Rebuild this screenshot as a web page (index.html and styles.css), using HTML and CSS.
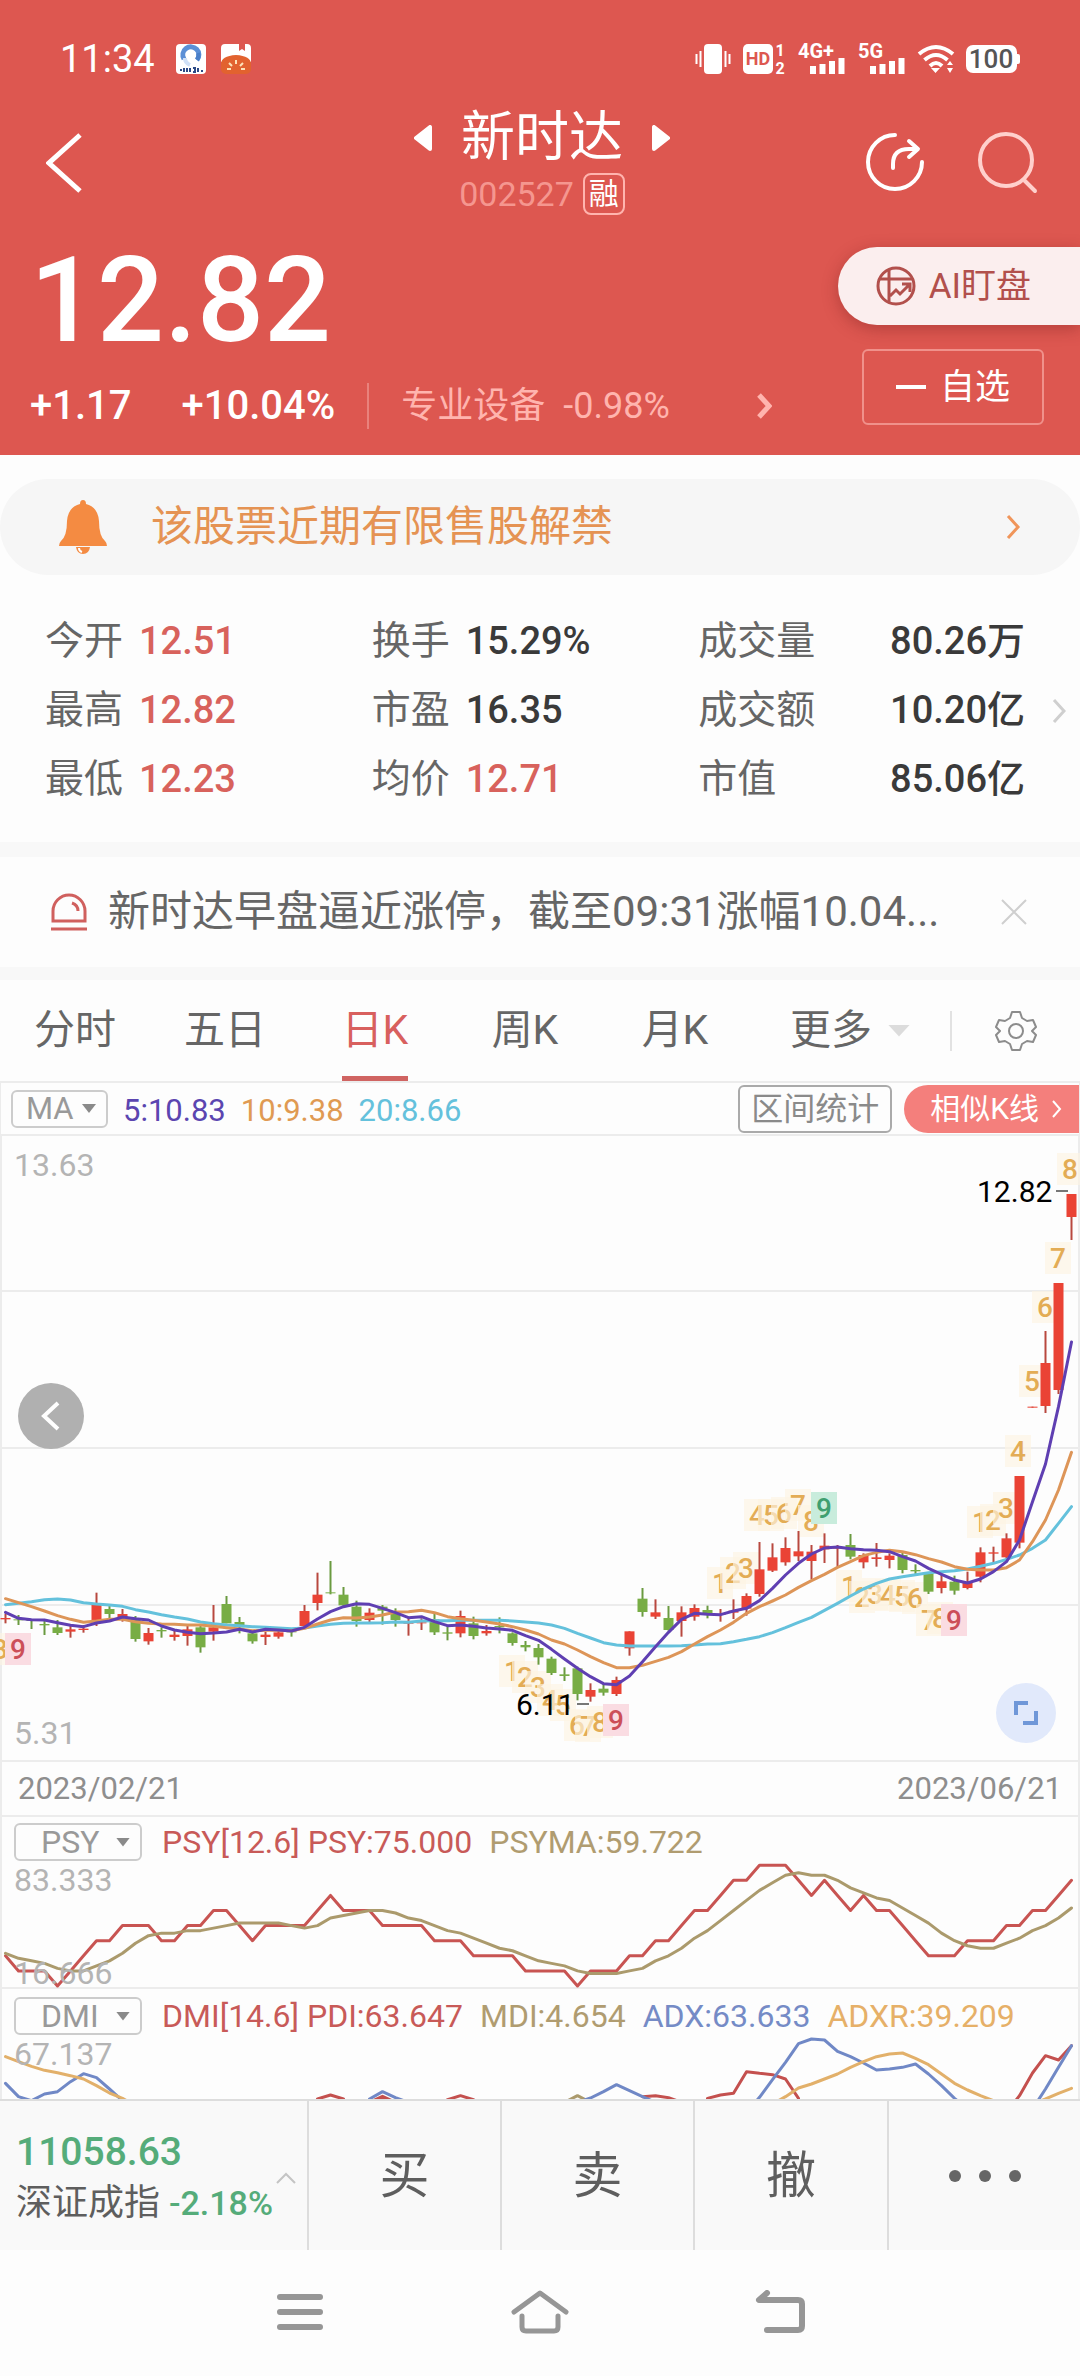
FILE: index.html
```html
<!DOCTYPE html>
<html lang="zh-CN">
<head>
<meta charset="utf-8">
<meta name="viewport" content="width=device-width, initial-scale=1">
<title>新时达 002527</title>
<link rel="stylesheet" href="styles.css">
</head>
<body>
<header class="header">
  <div class="status">
    <span class="clock">11:34</span>
    <svg class="app-icon" viewBox="0 0 30 30"><rect width="30" height="30" rx="4" fill="#fff"/><path d="M8 15a8 8 0 1 1 13 1" fill="none" stroke="#5b8fd6" stroke-width="5"/><path d="M21 16a8 8 0 0 0 1-7" fill="none" stroke="#4a7fc9" stroke-width="4"/><path d="M9 14q0 5 5 7" fill="none" stroke="#cfe0f7" stroke-width="4"/><path d="M4 26h2M8 24v4M11 24v4M14 24v4M17 24h2v4h-2M22 24v4M25 27h2" stroke="#2c4a86" stroke-width="2" fill="none"/></svg>
    <svg class="app-icon" viewBox="0 0 30 30"><path d="M4 0h14v7l3-2 3 2V0h2a4 4 0 0 1 4 4v14H0V4a4 4 0 0 1 4-4z" fill="#fff"/><path d="M0 20q0-8 15-9 15 1 15 9v5a5 5 0 0 1-5 5H5a5 5 0 0 1-5-5z" fill="#e2622f"/><path d="M6 25h4M8 19l3 3M15 16v4M22 19l-3 3M24 25h-4" stroke="#fde3b8" stroke-width="2"/></svg>
    <span class="status-right">
      <svg width="36" height="30" viewBox="0 0 36 30"><rect x="9" width="18" height="30" rx="4" fill="#fff"/><path d="M5.500 7v16M30.500 7v16M1.500 10v10M34.500 10v10" stroke="#fff" stroke-width="2"/></svg>
      <svg width="43" height="30" viewBox="0 0 43 30"><rect width="30" height="30" rx="5" fill="#fff"/><text x="15" y="21" text-anchor="middle" class="t-hd">HD</text><text x="37" y="12" text-anchor="middle" class="t-sim">1</text><text x="37" y="30" text-anchor="middle" class="t-sim">2</text></svg>
      <svg width="48" height="30" viewBox="0 0 48 30"><text x="0" y="14" class="t-net">4G+</text><path d="M15 22v8M24.500 20v10M34 17v13M43.500 14v16" stroke="#fff" stroke-width="6"/></svg>
      <svg width="48" height="30" viewBox="0 0 48 30"><text x="0" y="14" class="t-net">5G</text><path d="M15 22v8M24.500 20v10M34 17v13M43.500 14v16" stroke="#fff" stroke-width="6"/></svg>
      <svg width="36" height="30" viewBox="0 0 36 30"><path d="M1 10q17-14 34 0M6.500 16q11.500-10 23 0M12 22q6-6 12 0" fill="none" stroke="#fff" stroke-width="4"/><path d="M13 24h9l-4.500 5zM29 21l3-4 3 4zM29 24l3 5 3-5z" fill="#fff"/></svg>
      <svg width="54" height="28" viewBox="0 0 54 28"><rect width="51" height="28" rx="7" fill="#fff"/><rect x="49" y="9" width="5" height="10" rx="2" fill="#fff"/><text x="25" y="23" text-anchor="middle" class="t-bat">100</text></svg>
    </span>
  </div>

  <div class="title-row">
    <button class="icon-btn back" aria-label="返回"><svg width="36" height="60" viewBox="0 0 36 60"><path d="M34 2L3 30l31 28" fill="none" stroke="#fff" stroke-width="5"/></svg></button>
    <div class="title">
      <div class="name-line">
        <button class="icon-btn" aria-label="上一只"><svg width="18" height="26" viewBox="0 0 18 26"><path d="M16 2v22L2 13z" fill="#fff" stroke="#fff" stroke-width="4" stroke-linejoin="round"/></svg></button>
        <h1>新时达</h1>
        <button class="icon-btn" aria-label="下一只"><svg width="18" height="26" viewBox="0 0 18 26"><path d="M2 2v22l14-11z" fill="#fff" stroke="#fff" stroke-width="4" stroke-linejoin="round"/></svg></button>
      </div>
      <div class="code-line"><span>002527</span><span class="margin-tag">融</span></div>
    </div>
    <div class="actions">
      <button class="icon-btn" aria-label="分享"><svg width="58" height="60" viewBox="0 0 58 60"><g fill="none" stroke="#fff" stroke-width="4" stroke-linecap="round" stroke-linejoin="round"><path d="M29 3A27 27 0 1 0 56 30"/><path d="M27 36v-4q0-15 16-15h8M43 9l9 8-9 8"/></g></svg></button>
      <button class="icon-btn" aria-label="搜索"><svg width="60" height="62" viewBox="0 0 60 62"><g fill="none" stroke="#ffd0cc" stroke-width="4" stroke-linecap="round"><circle cx="28" cy="28" r="26"/><path d="M47 49l10 10"/></g></svg></button>
    </div>
  </div>

  <div class="quote">
    <div class="quote-main">
      <div class="price">12.82</div>
      <div class="change-line">
        <span class="chg">+1.17</span><span class="chg pct">+10.04%</span>
        <a href="#sector" class="sector"><span>专业设备</span><span class="sector-pct">-0.98%</span>
        <svg width="16" height="26" viewBox="0 0 16 26"><path d="M3 2l10 11L3 24" fill="none" stroke="#ffb4ae" stroke-width="5"/></svg></a>
      </div>
    </div>
    <div class="quote-side">
      <button class="ai"><svg width="40" height="40" viewBox="0 0 40 40"><g fill="none" stroke="#b2504c" stroke-width="3"><circle cx="20" cy="20" r="18"/><path d="M13 3v34M3 13h34M14 30l6-6 4 4 9-9M26 18h8v8"/></g></svg><span>AI盯盘</span></button>
      <button class="watch"><span class="minus"></span><span>自选</span></button>
    </div>
  </div>
</header>

<main>
  <a href="#unlock" class="notice">
    <svg width="48" height="54" viewBox="0 0 48 54"><path d="M24 0q3 0 3 4 12 3 13 17 0 15 6 20 2 2 2 5H0q0-3 2-5 6-5 6-20Q9 7 21 4q0-4 3-4z" fill="#f48b42"/><path d="M17 47h14q-1 7-7 7t-7-7z" fill="#f48b42"/><path d="M20 48q0 3 3 4" stroke="#fff" stroke-width="2" fill="none"/></svg>
    <span>该股票近期有限售股解禁</span>
    <svg width="16" height="26" viewBox="0 0 16 26"><path d="M3 2l10 11L3 24" fill="none" stroke="#f0955a" stroke-width="3"/></svg>
  </a>

  <section class="stats">
    <dl>
      <div><dt>今开</dt><dd class="up">12.51</dd></div>
      <div><dt>换手</dt><dd>15.29%</dd></div>
      <div class="wide"><dt>成交量</dt><dd>80.26万</dd></div>
      <div><dt>最高</dt><dd class="up">12.82</dd></div>
      <div><dt>市盈</dt><dd>16.35</dd></div>
      <div class="wide"><dt>成交额</dt><dd>10.20亿</dd></div>
      <div><dt>最低</dt><dd class="up">12.23</dd></div>
      <div><dt>均价</dt><dd class="up">12.71</dd></div>
      <div class="wide"><dt>市值</dt><dd>85.06亿</dd></div>
    </dl>
    <button class="icon-btn" aria-label="更多指标"><svg width="14" height="26" viewBox="0 0 14 26"><path d="M2 2l10 11L2 24" fill="none" stroke="#cfcfcf" stroke-width="3"/></svg></button>
  </section>

  <section class="news">
    <svg width="38" height="38" viewBox="0 0 38 38"><path d="M3 28V18a16 16 0 0 1 32 0v10zM22 10q6 2 6 8M1 36h36" fill="none" stroke="#d0605e" stroke-width="3"/></svg>
    <p>新时达早盘逼近涨停，截至09:31涨幅10.04...</p>
    <button class="icon-btn" aria-label="关闭"><svg width="26" height="26" viewBox="0 0 26 26"><path d="M1 1l24 24M25 1L1 25" stroke="#cfcfcf" stroke-width="2"/></svg></button>
  </section>

  <nav class="tabs">
    <button>分时</button>
    <button>五日</button>
    <button class="on">日K</button>
    <button>周K</button>
    <button>月K</button>
    <button class="more">更多<i class="caret"></i></button>
    <button class="settings" aria-label="设置"><svg width="42" height="42" viewBox="0 0 42 42"><g fill="none" stroke="#8c8c8c" stroke-width="2" stroke-linejoin="round"><path d="M17 2h8l2 6 5 3 6-1 3 7-4 4 4 4-3 7-6-1-5 3-2 6h-8l-2-6-5-3-6 1-3-7 4-4-4-4 3-7 6 1 5-3z"/><circle cx="21" cy="21" r="7"/></g></svg></button>
  </nav>

  <section class="toolbar">
    <span class="pick pick-ma"><select aria-label="主图指标"><option>MA</option></select></span>
    <span class="ma ma5">5:10.83</span><span class="ma ma10">10:9.38</span><span class="ma ma20">20:8.66</span>
    <button class="range">区间统计</button>
    <button class="similar">相似K线<svg width="12" height="18" viewBox="0 0 12 18"><path d="M2 1l7 8-7 8" fill="none" stroke="#fff" stroke-width="2"/></svg></button>
  </section>

  <section class="kline">
    <svg class="plot" id="kline" viewBox="0 0 1080 628" role="img" aria-label="日K线"></svg>
    <button class="prev" aria-label="向前"><svg width="20" height="30" viewBox="0 0 20 30"><path d="M17 2L3 15l14 13" fill="none" stroke="#fff" stroke-width="4"/></svg></button>
    <button class="expand" aria-label="全屏"><svg width="24" height="24" viewBox="0 0 24 24"><path d="M2 14V2h12M22 10v12H9" fill="none" stroke="#6f97d8" stroke-width="4"/></svg></button>
  </section>
  <div class="dates"><time>2023/02/21</time><time>2023/06/21</time></div>

  <section class="panel psy">
    <svg class="plot" id="psy" viewBox="0 0 1080 174" role="img" aria-label="PSY"></svg>
    <div class="panel-text">
      <div class="legend"><span class="pick"><select aria-label="副图指标一"><option>PSY</option></select></span><span class="c-red">PSY[12.6] PSY:75.000</span><span class="c-olive">PSYMA:59.722</span></div>
      <span class="scale">83.333</span>
      <span class="scale low">16.666</span>
    </div>
  </section>
  <section class="panel">
    <svg class="plot" id="dmi" viewBox="0 0 1080 110" role="img" aria-label="DMI"></svg>
    <div class="panel-text">
      <div class="legend"><span class="pick"><select aria-label="副图指标二"><option>DMI</option></select></span><span class="c-red">DMI[14.6] PDI:63.647</span><span class="c-olive">MDI:4.654</span><span class="c-blue">ADX:63.633</span><span class="c-gold">ADXR:39.209</span></div>
      <span class="scale">67.137</span>
    </div>
  </section>
</main>

<footer>
  <div class="trade">
    <a href="#index" class="index">
      <span><span class="index-value">11058.63</span><span class="index-line">深证成指 <b>-2.18%</b></span></span>
      <svg width="20" height="12" viewBox="0 0 20 12"><path d="M1 11l9-9 9 9" fill="none" stroke="#c4c4c4" stroke-width="2"/></svg>
    </a>
    <button>买</button>
    <button>卖</button>
    <button>撤</button>
    <button aria-label="更多"><svg width="74" height="14" viewBox="0 0 74 14"><g fill="#666"><circle cx="7" cy="7" r="6"/><circle cx="37" cy="7" r="6"/><circle cx="67" cy="7" r="6"/></g></svg></button>
  </div>
  <div class="sysnav">
    <button class="icon-btn" aria-label="菜单"><svg width="60" height="44" viewBox="0 0 60 44"><path d="M10 7h40M10 22h40M10 37h40" stroke="#969696" stroke-width="6" stroke-linecap="round"/></svg></button>
    <button class="icon-btn" aria-label="主页"><svg width="60" height="44" viewBox="0 0 60 44"><g fill="none" stroke="#969696" stroke-width="5" stroke-linecap="round" stroke-linejoin="round"><path d="M4 22L30 3l26 19"/><path d="M12 26v11q0 4 4 4h28q4 0 4-4V26"/></g></svg></button>
    <button class="icon-btn" aria-label="后退"><svg width="60" height="44" viewBox="0 0 60 44"><path d="M17 3L9 10h39q4 0 4 4v22q0 4-4 4H17" fill="none" stroke="#969696" stroke-width="6" stroke-linecap="round" stroke-linejoin="round"/></svg></button>
  </div>
</footer>
<script src="chart.js"></script>
</body>
</html>
```
FILE: styles.css
```css
* { box-sizing: border-box; }
body {
  margin: 0;
  background: #fdfdfd;
  color: #666;
  font-family: Roboto, "Noto Sans CJK SC", sans-serif;
  font-size: 32px;
  line-height: 1.2;
}
button, select {
  margin: 0;
  padding: 0;
  border: 0;
  background: none;
  color: inherit;
  font: inherit;
  appearance: none;
}
a { color: inherit; text-decoration: none; }
svg { display: block; flex: none; }
h1, p, dl, dd { margin: 0; }
.icon-btn { display: flex; }

/* one-line labels that mix Latin and Chinese glyphs */
.sector span, .ai span, .watch span, .notice span, .range, .similar { line-height: 1; }

/* header */
.header { background: #dd5750; color: #fff; padding-bottom: 25px; }
.status {
  display: flex;
  align-items: center;
  padding: 37px 60px 23px;
  line-height: 44px;
}
.clock { font-size: 38px; margin-right: 21px; }
.app-icon { width: 30px; height: 30px; margin-right: 15px; }
.status-right { display: flex; align-items: center; gap: 12px; margin-left: auto; }
.status svg { overflow: visible; }
.status text { font-family: Roboto, sans-serif; font-weight: 700; fill: #fff; }
.status .t-hd { font-size: 18px; fill: #dd5750; }
.t-sim { font-size: 16px; }
.t-net { font-size: 20px; }
.status .t-bat { font-size: 26px; fill: #555; font-weight: 500; }

.title-row {
  display: grid;
  grid-template-columns: 1fr auto 1fr;
  align-items: center;
  padding: 0 42px 0 46px;
}
.name-line { display: flex; align-items: center; gap: 29px; }
h1 { font-size: 54px; font-weight: 400; line-height: 68px; }
.code-line {
  display: flex;
  align-items: center;
  justify-content: center;
  gap: 9px;
  height: 44px;
  font-size: 34px;
  color: #f5968f;
}
.margin-tag {
  width: 42px;
  height: 42px;
  border: 2px solid #ffb4ae;
  border-radius: 8px;
  color: #fff;
  font-size: 30px;
  line-height: 38px;
  text-align: center;
}
.back, .actions { margin-top: 5px; }
.actions { display: flex; justify-content: flex-end; gap: 54px; }

.quote { display: flex; justify-content: space-between; padding-left: 30px; }
.price { margin-top: 25px; font-size: 118px; line-height: 120px; font-weight: 500; }
.change-line { display: flex; align-items: center; margin-top: 21px; height: 48px; }
.chg { font-size: 40px; font-weight: 500; }
.pct { margin-left: 50px; }
.sector {
  display: flex;
  align-items: center;
  height: 46px;
  margin-left: 32px;
  padding-left: 32px;
  border-left: 2px solid #e9827c;
  color: #ffb4ae;
  font-size: 36px;
}
.sector-pct { margin: 0 86px 0 18px; }
.quote-side { display: flex; flex-direction: column; align-items: flex-end; gap: 24px; padding-top: 31px; }
.ai {
  display: flex;
  align-items: center;
  gap: 13px;
  height: 78px;
  padding: 0 49px 0 38px;
  border-radius: 39px 0 0 39px;
  background: #fbeeee;
  box-shadow: 0 4px 16px rgba(120, 30, 30, .4);
  color: #b2504c;
  font-size: 35px;
}
.watch {
  display: flex;
  align-items: center;
  justify-content: center;
  gap: 14px;
  height: 76px;
  margin-right: 36px;
  padding: 0 32px;
  border: 2px solid #f0918b;
  border-radius: 6px;
  font-size: 35px;
}
.minus { width: 30px; height: 4px; background: #fff; }

/* notice */
.notice {
  display: flex;
  align-items: center;
  margin-top: 24px;
  height: 96px;
  padding: 0 59px;
  border-radius: 48px;
  background: #f6f6f6;
  color: #e59353;
  font-size: 42px;
}
.notice span { flex: 1; margin-left: 44px; }

/* stats */
.stats { display: flex; align-items: center; padding: 32px 14px 28px 45px; border-bottom: 15px solid #f8f8f8; }
.stats dl { flex: 1; display: grid; grid-template-columns: repeat(3, 1fr); line-height: 69px; font-size: 38px; margin-right: 27px; }
.stats dl div { display: flex; gap: 16px; }
.stats .wide { justify-content: space-between; }
dt { font-size: 39px; }
dd { color: #3a3a3a; font-weight: 500; }
dd.up { color: #d8625c; }

/* news */
.news { display: flex; align-items: center; height: 123px; padding: 0 53px 0 50px; border-bottom: 13px solid #f8f8f8; font-size: 42px; }
.news p { flex: 1; margin-left: 20px; white-space: nowrap; }

/* period tabs */
.tabs { display: grid; grid-template-columns: 15fr 15fr 15fr 15fr 15fr 20fr 13fr; height: 101px; font-size: 41px; }
.tabs button { display: flex; align-items: center; justify-content: center; border: solid transparent; border-width: 5px 0; }
.tabs .on { justify-self: center; color: #d8605e; border-bottom-color: #d06462; }
.caret { width: 22px; height: 12px; margin-left: 16px; background: #dcdcdc; clip-path: polygon(0 0, 100% 0, 50% 100%); }
.tabs .settings { align-self: center; height: 40px; border: 0; border-left: 2px solid #e2e2e2; }

/* chart toolbar */
.toolbar { display: flex; align-items: center; gap: 15px; height: 53px; padding-left: 10px; border: 1px solid #ececec; border-width: 2px 1px 0; font-size: 31px; }
.pick { display: grid; align-items: center; color: #999; }
.pick::after { content: ""; grid-area: 1 / 1; justify-self: end; width: 14px; height: 9px; margin-right: 12px; background: #8a8a8a; clip-path: polygon(0 0, 100% 0, 50% 100%); pointer-events: none; }
.pick select { grid-area: 1 / 1; width: 128px; height: 38px; padding-left: 25px; border: 2px solid #ccc; border-radius: 6px; line-height: 34px; }
.pick-ma select { width: 97px; padding-left: 13px; }
.ma { padding-top: 5px; }
.ma5 { color: #5b45b0; }
.ma10 { color: #e09a52; }
.ma20 { color: #64c1dc; }
.range { margin-left: auto; height: 48px; padding: 0 11px; border: 2px solid #aaa; border-radius: 6px; color: #8a8a8a; font-size: 32px; }
.similar { display: flex; align-items: center; gap: 12px; height: 48px; margin-left: -3px; padding: 0 16px 0 26px; border-radius: 24px 0 0 24px; background: #f47f7c; color: #fff; font-size: 30px; }

/* charts */
.kline { position: relative; }
.plot { width: 100%; height: auto; }
.plot text { font-family: Roboto, sans-serif; }
.plot .axis { font-size: 32px; fill: #b4b4b4; }
.plot .mark { font-size: 30px; fill: #000; }
.plot .count { font-size: 28px; font-weight: 500; text-anchor: middle; }
.prev, .expand { position: absolute; display: flex; align-items: center; justify-content: center; border-radius: 50%; }
.prev { left: 18px; top: 249px; width: 66px; height: 66px; background: #b0b0b0; }
.expand { right: 24px; bottom: 19px; width: 60px; height: 60px; background: #e1e9fb; }
.dates { display: flex; justify-content: space-between; padding: 0 16px; border: solid #ececec; border-width: 0 2px; line-height: 53px; font-size: 31px; color: #8e8e8e; }
.panel { display: grid; }
.panel > * { grid-area: 1 / 1; }
.panel-text { display: flex; flex-direction: column; align-items: flex-start; padding: 8px 14px 0; }
.psy .panel-text { padding-bottom: 0; }
.legend { display: flex; align-items: center; gap: 17px; font-size: 32px; line-height: 38px; }
.legend .pick { margin-right: 3px; }
.scale { line-height: 38px; font-size: 32px; color: #b4b4b4; }
.low { margin-top: auto; line-height: 32px; }
.c-red { color: #c85a58; }
.c-olive { color: #b09c70; }
.c-blue { color: #758bc6; }
.c-gold { color: #e6b068; }

/* footer */
.trade { display: grid; grid-template-columns: 307fr 193fr 193fr 194fr 193fr; height: 151px; border-top: 2px solid #ddd; background: #f9f9f9; color: #5e5e5e; }
.trade button { display: flex; align-items: center; justify-content: center; border-left: 2px solid #ddd; font-size: 50px; line-height: 1; }
.index { display: flex; align-items: center; justify-content: space-between; padding: 4px 11px 0 16px; }
.index-value, .index-line { display: block; white-space: nowrap; line-height: 51px; }
.index-value { font-size: 39px; font-weight: 500; color: #55ac7a; }
.index-line { font-size: 36px; }
.index b { font-size: 34px; font-weight: 500; color: #55ac7a; }
.sysnav { display: flex; justify-content: center; gap: 180px; padding: 40px 0; }
```
FILE: chart.js
```js
const UP = '#ea4335', DOWN = '#78ad45';
const x = i => 5.5 + 13 * i;

// Candles: colour, high, body top, body bottom, low, in thirds of a unit
// measured down from the middle reference level.
const candles = [
  'r,222,234,238,250','g,225,238,241,255','g,240,240,243,267','g,240,252,256,285','g,240,262,279,285',
  'r,258,268,275,293','r,255,266,270,278','r,158,192,240,258','g,195,207,222,240','r,207,222,235,245',
  'g,228,235,297,305','r,264,279,304,314','g,262,270,274,293','r,270,284,291,302','r,258,268,288,317',
  'g,258,262,322,338','r,195,262,275,302','g,168,192,250,250','g,231,246,262,280','g,270,280,304,311',
  'r,275,284,291,315','r,270,277,290,296','g,270,274,277,290','r,195,213,258,262','r,98,164,189,211',
  'g,63,157,160,163','g,141,164,196,200','g,182,200,243,260','r,205,218,240,248','g,195,200,212,254',
  'g,205,222,240,260','r,235,248,251,287','r,235,247,250,270','g,220,238,277,285','g,258,277,281,301',
  'r,212,228,280,292','g,230,250,288,298','r,255,273,280,287','g,232,258,262,280','g,277,280,309,317',
  'g,303,315,322,334','g,312,324,352,374','g,350,356,399,405','g,382,403,408,423','g,380,385,462,481',
  'r,430,450,470,485','g,430,446,458,467','r,410,420,462,468','r,274,274,325,347','g,144,176,216,230',
  'r,178,217,230,237','g,198,234,270,272','r,199,217,243,290','r,193,204,230,242','g,197,210,222,235',
  'r,207,222,225,245','r,178,212,218,237','r,160,168,206,227','r,6,88,162,170','r,10,52,92,96',
  'r,-8,24,67,77','r,-27,34,49,63','r,15,35,63,118','r,-20,17,28,69','r,15,22,26,80',
  'g,-18,15,50,58','r,40,45,67,85','r,9,52,57,80','r,40,47,60,85','g,33,45,90,100',
  'g,73,90,94,107','g,100,100,155,162','r,105,124,144,160','g,107,125,152,164','r,95,128,144,148',
  'r,22,37,110,127','r,20,37,41,70','r,-20,-5,52,65','r,-192,-192,8,25','r,-400,-400,-397,-397',
  'r,-627,-531,-402,-381','r,-771,-771,-450,-438','r,-1038,-1038,-969,-900'
];
const ma5 = [217,235,239,240,248,256,260,249,243,231,236,240,258,270,277,281,279,276,268,276,268,270,273,262,237,215,200,191,193,205,218,233,230,245,257,255,259,264,267,271,287,301,328,357,385,410,431,434,408,365,320,277,238,220,223,224,213,205,182,145,105,70,42,24,21,26,29,31,35,50,63,85,103,120,129,117,95,65,0,-115,-228,-400,-594];
const ma10 = [176,188,200,213,227,238,247,243,238,238,245,250,252,253,255,255,259,263,267,272,271,271,272,265,252,240,233,234,231,225,216,215,211,218,230,236,241,246,252,260,270,282,300,312,330,350,368,383,383,376,364,352,335,312,290,270,247,220,200,183,165,142,122,103,82,65,47,37,31,35,44,56,66,80,88,90,90,83,60,5,-60,-150,-263];
const ma20 = [194,190,185,179,177,180,188,192,195,199,209,216,224,231,237,246,251,255,257,260,262,264,266,264,258,253,250,249,249,248,246,247,243,242,242,241,241,241,241,243,246,249,255,265,280,294,308,315,318,318,318,318,317,315,312,311,305,298,290,278,263,247,232,211,190,168,147,130,117,110,104,98,95,92,87,79,70,58,45,25,0,-50,-100];

// Nine-turn counts: digit, x, y, kind (o open, b bottom, t top)
const counts = [
  [8,0,515,'o'],[9,18,515,'b'],
  [1,512,537,'o'],[2,525,543,'o'],[3,538,553,'o'],[4,550,566,'o'],[5,563,571,'o'],[6,577,591,'o'],[7,588,592,'o'],[8,600,588,'o'],[9,616,586,'b'],
  [1,720,449,'o'],[2,733,439,'o'],[3,746,434,'o'],[4,757,381,'o'],[5,771,381,'o'],[6,784,379,'o'],[7,798,371,'o'],[8,811,387,'o'],[9,824,374,'t'],
  [1,849,452,'o'],[2,862,463,'o'],[3,875,460,'o'],[4,888,461,'o'],[5,902,462,'o'],[6,915,464,'o'],[7,929,486,'o'],[8,940,484,'o'],[9,954,486,'b'],
  [1,980,388,'o'],[2,993,386,'o'],[3,1006,374,'o'],[4,1018,317,'o'],[5,1032,247,'o'],[6,1045,173,'o'],[7,1058,124,'o'],[8,1070,35,'o']
];
const tint = { o: ['#fdf4e3', '#e3ac55'], b: ['#fadce2', '#cc4f58'], t: ['#c8ecdc', '#3f9f70'] };

const line = (pts, color, w = 3) =>
  `<polyline points="${pts.map(p => p.join()).join(' ')}" fill="none" stroke="${color}" stroke-width="${w}" stroke-linejoin="round" stroke-linecap="round"/>`;
const rule = (y, c = '#ececec') => `<path d="M0 ${y}H1080" stroke="${c}" stroke-width="2"/>`;
const sides = h => `<path d="M1 0V${h}M1079 0V${h}" stroke="#ececec" stroke-width="2"/>`;

const y = v => 406 + v / 3;
let k = sides(628) + [1, 157, 314, 471, 627].map(v => rule(v)).join('');
for (const [n, cx, cy, kind] of counts) {
  const [bg, fg] = tint[kind];
  k += `<rect x="${cx - 13}" y="${cy - 16}" width="26" height="32" fill="${bg}" fill-opacity="${kind === 'o' ? .65 : 1}"/>`
    + `<text class="count" x="${cx}" y="${cy + 10}" fill="${fg}">${n}</text>`;
}
candles.forEach((row, i) => {
  const [c, ...v] = row.split(',');
  const [hi, top, bot, lo] = v.map(n => y(+n));
  const color = c === 'r' ? UP : DOWN;
  const wick = c === 'r' ? '#b8483f' : '#6a9a40';
  k += `<path d="M${x(i)} ${hi}V${lo}" stroke="${wick}" stroke-width="2"/>`
    + `<rect x="${x(i) - 5}" y="${top}" width="10" height="${Math.max(bot - top, 1)}" fill="${color}"/>`;
});
k += line(ma20.map((v, i) => [x(i), y(v)]), '#64c1dc')
  + line(ma10.map((v, i) => [x(i), y(v)]), '#dd9558')
  + line(ma5.map((v, i) => [x(i), y(v)]), '#5f3fb2')
  + '<text class="axis" x="14" y="42">13.63</text><text class="axis" x="14" y="610">5.31</text>'
  + '<text class="mark" x="977" y="68">12.82</text><path d="M1056 57h12M577 570h12" stroke="#777" stroke-width="2"/>'
  + '<text class="mark" x="516" y="581">6.11</text>';
document.getElementById('kline').innerHTML = k;

// PSY: rising days out of the last 12, and its 6-day average
const before = [5, 4, 4, 4, 4];
const rising = [4,3,3,3,2,3,4,5,5,6,6,6,5,5,6,6,7,7,6,5,6,6,6,6,7,8,7,7,7,6,6,6,6,5,5,5,4,4,4,4,3,3,3,3,2,3,3,3,4,4,5,5,6,7,7,8,9,9,10,10,10,9,8,9,8,7,8,7,7,6,5,4,4,4,5,5,5,6,6,7,7,8,9];
const all = before.concat(rising);
const py = n => 171 - (n - 2) * 15.1;
const avg = rising.map((_, i) => all.slice(i, i + 6).reduce((a, b) => a + b) / 6);
document.getElementById('psy').innerHTML = sides(174) + rule(1) + rule(173)
  + line(rising.map((n, i) => [x(i), py(n)]), '#c85452')
  + line(avg.map((n, i) => [x(i), py(n)]), '#ab9a6c');

// DMI: each run is a first day followed by its values
const run = (start, vals, color) => line(vals.map((v, j) => [x(start + j), v / 3 - 230]), color);
const R = '#c4504e', B = '#7088c6', G = '#e2b06a';
document.getElementById('dmi').innerHTML = sides(110)
  + run(24, [1020,1008,1020], R) + run(28, [1030,1012,1030], R) + run(34, [1022,1010,1022], R)
  + run(43, [1030,1010,1030], '#ab9a6c')
  + run(49, [1013,1010,1016,1030], R)
  + run(54, [1018,1008,1003,938,943,947,960,1018], R)
  + run(77, [1060,1010,942,890,903,860], R)
  + run(0, [973,1013,1025,1005,998,968,944,956,990,1025], B)
  + run(28, [1020,998,1016,1030], B) + run(44, [1030,1017,998,977,995,1013,1030], B)
  + run(57, [1060,1015,962,910,854,840,843,877,893,912,933,930,925,915,945,980,1018,1050], B)
  + run(79, [1050,990,925,860], B)
  + run(0, [893,908,922,934,941,950,960,980,1002,1018,1040], G)
  + run(59, [1035,1013,987,975,960,945,925,908,893,885,882,898,917,945,973,993,1010,1025], G)
  + run(79, [1035,1020,1003,988], G);
```
